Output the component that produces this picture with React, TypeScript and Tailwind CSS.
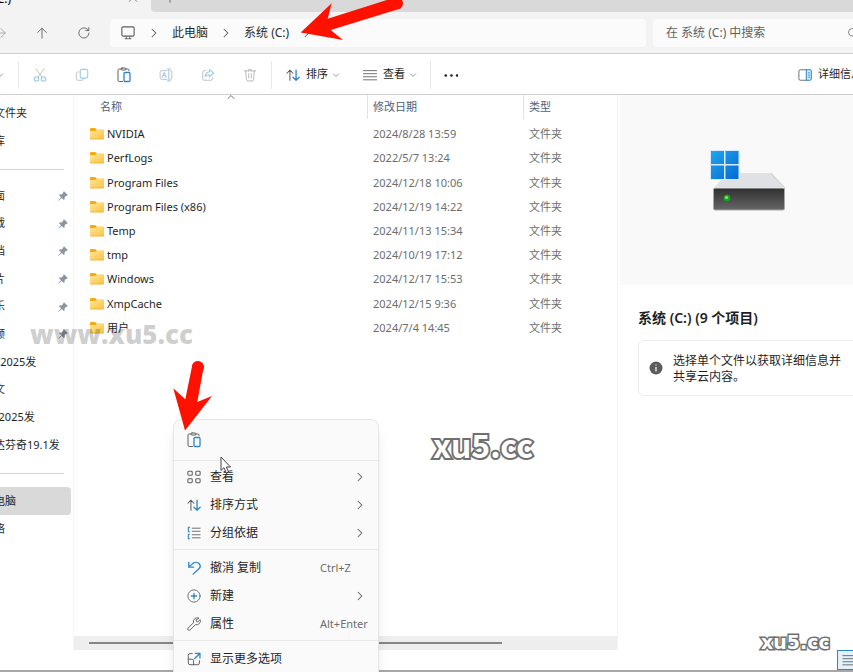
import React from 'react';

const BLUE = '#2a86c8';
const GRAY = '#5f5f5f';

const files = [
  { name: 'NVIDIA', date: '2024/8/28 13:59' },
  { name: 'PerfLogs', date: '2022/5/7 13:24' },
  { name: 'Program Files', date: '2024/12/18 10:06' },
  { name: 'Program Files (x86)', date: '2024/12/19 14:22' },
  { name: 'Temp', date: '2024/11/13 15:34' },
  { name: 'tmp', date: '2024/10/19 17:12' },
  { name: 'Windows', date: '2024/12/17 15:53' },
  { name: 'XmpCache', date: '2024/12/15 9:36' },
  { name: '用户', date: '2024/7/4 14:45' },
];

const quickAccess = [
  { label: '面', pinned: true },
  { label: '载', pinned: true },
  { label: '档', pinned: true },
  { label: '片', pinned: true },
  { label: '乐', pinned: true },
  { label: '频', pinned: true },
  { label: 'e2025发', pinned: false },
  { label: '文', pinned: false },
  { label: 'r2025发', pinned: false },
  { label: '达芬奇19.1发', pinned: false },
];

interface IconProps {
  className?: string;
  children: React.ReactNode;
}

const Icon = ({ className = 'size-[14px]', children }: IconProps) => (
  <svg
    className={`${className} shrink-0`}
    viewBox="0 0 16 16"
    fill="none"
    stroke={GRAY}
    strokeLinecap="round"
    strokeLinejoin="round"
    aria-hidden="true"
  >
    {children}
  </svg>
);

const Chevron = ({ className = 'size-3' }: { className?: string }) => (
  <Icon className={className}>
    <path d="M5.5 3l5 5-5 5" strokeWidth={1.4} />
  </Icon>
);

const ChevronDown = () => (
  <Icon className="size-2">
    <path d="M3 6l5 5 5-5" strokeWidth={1.8} stroke="#8a8a8a" />
  </Icon>
);

const PasteIcon = () => (
  <Icon className="size-4">
    <path d="M6.5 14.5H3.2A1.2 1.2 0 0 1 2 13.3V3.2A1.2 1.2 0 0 1 3.2 2H5m5 0h1.8A1.2 1.2 0 0 1 13 3.2v.6" />
    <rect x="5" y="1" width="5" height="2" rx="1" />
    <rect x="8" y="5.5" width="6" height="9" rx="1" stroke={BLUE} strokeWidth={1.3} fill="#fff" />
  </Icon>
);

const SortIcon = () => (
  <Icon>
    <path d="M4.5 14V2.5M1 6l3.5-3.5L8 6" strokeWidth={1.2} />
    <path d="M11.5 2.5V14M8 10.5l3.5 3.5 3.5-3.5" stroke={BLUE} strokeWidth={1.5} />
  </Icon>
);

const FolderIcon = () => (
  <svg className="h-3 w-[14px] shrink-0" viewBox="0 0 14 12" aria-hidden="true">
    <path d="M0 1.2C0 .5.4 0 1.1 0h3.6c.5 0 .8.2 1.1.5L7 1.8h6c.6 0 1 .4 1 1V6H0z" fill="#f4ab12" />
    <path d="M0 4c0-.5.4-.9.9-.9h3.8c.4 0 .7-.1 1-.4l.9-.6c.2-.2.5-.3.8-.3H13c.6 0 1 .4 1 1v7.5c0 .6-.4 1-1 1H1c-.6 0-1-.4-1-1z" fill="url(#folder)" />
    <path d="M.3 11h13.4" stroke="#e5a93a" strokeWidth=".7" />
    <defs>
      <linearGradient id="folder" x1="0" y1="0" x2="1" y2="1">
        <stop offset="0" stopColor="#ffe59a" />
        <stop offset="1" stopColor="#fcc43a" />
      </linearGradient>
    </defs>
  </svg>
);

const PinIcon = () => (
  <svg className="size-[10px] shrink-0" viewBox="0 0 10 10" fill="#8b95a0" aria-hidden="true">
    <path d="M6 .3L9.7 4l-.9.9-.6-.2-1.6 1.6.1 1.8-.9.9-2-2L.6 9.7.2 9.4 3 6.2l-2-2 .9-.9 1.8.1 1.6-1.6-.2-.6z" />
  </svg>
);

const NavigationBar = () => (
  <header className="border-b border-[#cfcfcf] bg-[#f3f3f3]">
    <div className="flex h-3 items-start overflow-hidden">
      <div className="flex w-[151px] shrink-0 items-start justify-between pr-3">
        <span className="-mt-[9px] -ml-[34px] text-xs leading-4">系统 (C:)</span>
        <button aria-label="关闭标签页" className="-mt-2">
          <Icon className="size-3">
            <path d="M3 2.5l10 10M13 2.5l-10 10" />
          </Icon>
        </button>
      </div>
      <div className="flex h-3 flex-1 items-start rounded-bl bg-[#d9d9d9] pl-3">
        <button aria-label="新建标签页" className="-mt-[10px]">
          <Icon>
            <path d="M8 2v12M2 8h12" />
          </Icon>
        </button>
      </div>
    </div>
    <div className="flex h-[41px] items-center">
      <nav className="-ml-[7px] flex w-[117px] shrink-0 items-center gap-7">
        <button aria-label="前进">
          <Icon>
            <path d="M1 8h13M9 3l5 5-5 5" stroke="#a5a5a5" />
          </Icon>
        </button>
        <button aria-label="上移">
          <Icon>
            <path d="M8 14V2.5M3 7.5l5-5 5 5" />
          </Icon>
        </button>
        <button aria-label="刷新">
          <Icon>
            <path d="M13.7 8A5.8 5.8 0 1 1 11.5 3.4L13.3 5M13.5 1.8V5.2H10" />
          </Icon>
        </button>
      </nav>
      <div className="flex h-7 flex-1 items-center rounded bg-[#fbfbfb] pl-[11px] text-xs text-[#2b2b2b]">
        <Icon>
          <rect x="1" y="1" width="14" height="10.5" rx="1.5" strokeWidth={1.3} />
          <path d="M4.5 14.5h7M6 12v2.5M10 12v2.5" />
        </Icon>
        <span className="ml-[13px]">
          <Chevron />
        </span>
        <button className="ml-3">此电脑</button>
        <span className="ml-3">
          <Chevron />
        </span>
        <button className="ml-3">系统 (C:)</button>
        <span className="ml-3">
          <Chevron />
        </span>
      </div>
      <div className="ml-[7px] flex h-7 w-[200px] shrink-0 items-center rounded-l bg-[#fbfbfb] pl-[13px]">
        <input
          aria-label="搜索"
          placeholder="在 系统 (C:) 中搜索"
          className="w-[181px] bg-transparent text-xs outline-none placeholder:text-[#5f5f5f]"
        />
        <Icon className="-mr-3 size-3">
          <circle cx="7" cy="7" r="5" />
          <path d="M11 11l4 4" />
        </Icon>
      </div>
    </div>
  </header>
);

const Toolbar = () => (
  <div className="flex h-[41px] items-center overflow-hidden border-b border-[#cfcfcf] bg-white pt-px text-[11px] text-[#1f1f1f]">
    <button aria-label="新建" className="-ml-1 w-[22px] shrink-0">
      <ChevronDown />
    </button>
    <div className="h-7 w-px bg-[#e8e8e8]" />
    <div className="grid w-[252px] shrink-0 grid-cols-6 justify-items-center">
      <button aria-label="剪切" disabled>
        <Icon>
          <path d="M3.5 1l6.7 9.5M12.5 1L5.8 10.5" stroke="#b9b9b9" />
          <circle cx="4" cy="12.5" r="2.5" stroke="#9ccbec" strokeWidth={1.4} />
          <circle cx="12" cy="12.5" r="2.5" stroke="#9ccbec" strokeWidth={1.4} />
        </Icon>
      </button>
      <button aria-label="复制" disabled>
        <Icon>
          <path d="M4 4.5h-.8A1.7 1.7 0 0 0 1.5 6.2v6A1.8 1.8 0 0 0 3.3 14H8a1.7 1.7 0 0 0 1.7-1.5" stroke="#b9b9b9" />
          <rect x="6" y="1.5" width="8.5" height="10" rx="1.7" stroke="#9ccbec" strokeWidth={1.3} />
        </Icon>
      </button>
      <button aria-label="粘贴">
        <PasteIcon />
      </button>
      <button aria-label="重命名" disabled>
        <Icon>
          <path d="M9 13H3A1.7 1.7 0 0 1 1.3 11.3V4.7A1.7 1.7 0 0 1 3 3h6M13 3a1.7 1.7 0 0 1 1.7 1.7v6.6A1.7 1.7 0 0 1 13 13" stroke="#b9b9b9" />
          <path d="M9.5 1.2H13M9.5 14.8H13M11.2 1.2v13.6M3.5 10.5L5.9 5l2.3 5.5M4.4 8.8h3" stroke="#9ccbec" strokeWidth={1.2} />
        </Icon>
      </button>
      <button aria-label="共享" disabled>
        <Icon>
          <path d="M5.5 3H3.7A1.7 1.7 0 0 0 2 4.7v7.6A1.7 1.7 0 0 0 3.7 14h7.6a1.7 1.7 0 0 0 1.7-1.7V11" stroke="#b9b9b9" />
          <path d="M9.7 1.8L14.5 6l-4.8 4.2V7.8C7.5 7.7 6 8.3 4.7 10c.2-3 1.8-5.5 5-5.8z" stroke="#9ccbec" strokeWidth={1.2} />
        </Icon>
      </button>
      <button aria-label="删除" disabled>
        <Icon>
          <path d="M1.5 3.3h13M6 3.3a2 2 0 0 1 4 0M3 3.3l.9 10c.1.9.7 1.5 1.5 1.5h5.2c.8 0 1.4-.6 1.5-1.5l.9-10M6.5 6.5v5M9.5 6.5v5" stroke="#b0b0b0" />
        </Icon>
      </button>
    </div>
    <div className="h-7 w-px shrink-0 bg-[#e8e8e8]" />
    <button className="ml-[14px] flex shrink-0 items-center">
      <SortIcon />
      <span className="mr-1 ml-[6px]">排序</span>
      <ChevronDown />
    </button>
    <button className="ml-[23px] flex shrink-0 items-center">
      <Icon>
        <path d="M.5 3h15M.5 6.500h15M.5 10h15M.5 13.500h15" />
      </Icon>
      <span className="mr-1 ml-[6px]">查看</span>
      <ChevronDown />
    </button>
    <div className="ml-[13px] h-7 w-px shrink-0 bg-[#e8e8e8]" />
    <button aria-label="更多" className="ml-[13px] shrink-0">
      <Icon>
        <g fill="#1f1f1f" stroke="none">
          <circle cx="2" cy="8.5" r="1.5" />
          <circle cx="8.5" cy="8.5" r="1.5" />
          <circle cx="15" cy="8.5" r="1.5" />
        </g>
      </Icon>
    </button>
    <button className="-mr-[9px] ml-auto flex shrink-0 items-center gap-[6px]">
      <Icon>
        <path d="M9.5 2H2.7A1.7 1.7 0 0 0 1 3.7v8.6A1.7 1.7 0 0 0 2.7 14h6.8" />
        <path d="M9.5 2h4a1.7 1.7 0 0 1 1.7 1.7v8.6a1.7 1.7 0 0 1-1.7 1.7h-4z" stroke={BLUE} fill="#d9effc" strokeWidth={1.2} />
        <path d="M11.7 5.5h1.5M11.7 8h1.5M11.7 10.5h1.5" stroke={BLUE} />
      </Icon>
      详细信息
    </button>
  </div>
);

const SidebarItem = ({ label, pinned = false }: { label: string; pinned?: boolean }) => (
  <li className="flex items-center justify-between pr-[5px] whitespace-nowrap">
    <a href="#" className="-ml-[6px]">
      {label}
    </a>
    {pinned && <PinIcon />}
  </li>
);

const Sidebar = () => (
  <aside className="w-[74px] shrink-0 overflow-hidden border-r border-[#f5f5f5] pt-1 text-[11px] text-[#1f1f1f]">
    <ul className="grid auto-rows-[28px]">
      <SidebarItem label="文件夹" />
      <SidebarItem label="库" />
    </ul>
    <hr className="mt-[14px] mr-[9px] mb-3 border-[#d4d4d4]" />
    <ul className="grid h-[277px] auto-rows-fr">
      {quickAccess.map((item) => (
        <SidebarItem key={item.label} label={item.label} pinned={item.pinned} />
      ))}
    </ul>
    <hr className="mt-[14px] mr-[9px] mb-[13px] border-[#d4d4d4]" />
    <ul className="mr-[2px] grid auto-rows-[28px]">
      <li className="flex items-center rounded-r-sm bg-[#d9d9d9]">
        <a href="#" className="-ml-[6px]">
          电脑
        </a>
      </li>
      <SidebarItem label="络" />
    </ul>
  </aside>
);

const FileList = () => (
  <main className="flex min-w-0 flex-1 flex-col border-r border-[#f3f3f3]">
    <table className="h-[245px] w-full table-fixed text-left text-[11px] leading-4">
      <colgroup>
        <col className="w-[293px]" />
        <col className="w-[156px]" />
        <col />
      </colgroup>
      <thead className="text-[#4c607a]">
        <tr className="h-[27px] align-top">
          <th className="p-0 font-normal">
            <div className="flex h-6 items-start">
              <span className="w-[153px] pt-1 pl-[26px]">名称</span>
              <Icon className="size-2">
                <path d="M2 7l6-6 6 6" strokeWidth={1.8} />
              </Icon>
            </div>
          </th>
          <th className="p-0 font-normal">
            <div className="h-6 border-l border-[#e2e2e2] pt-1 pl-[5px]">修改日期</div>
          </th>
          <th className="p-0 font-normal">
            <div className="h-6 border-l border-[#e2e2e2] pt-1 pl-[5px]">类型</div>
          </th>
        </tr>
      </thead>
      <tbody className="text-[#6d6d6d]">
        {files.map((file) => (
          <tr key={file.name}>
            <td className="p-0 pl-4">
              <div className="flex items-center gap-[3px] text-[#1f1f1f]">
                <FolderIcon />
                {file.name}
              </div>
            </td>
            <td className="p-0 pl-[6px]">{file.date}</td>
            <td className="p-0 pl-[6px]">文件夹</td>
          </tr>
        ))}
      </tbody>
    </table>
    <div className="mt-auto flex h-[14px] items-center bg-[#eeeeee] pl-[15px]">
      <div className="h-[2px] w-[413px] bg-[#868686]" />
    </div>
  </main>
);

const DriveImage = () => (
  <svg className="h-[62px] w-[78px]" viewBox="0 0 78 62" aria-hidden="true">
    <defs>
      <linearGradient id="tile" x1="0" y1="0" x2="1" y2="1">
        <stop offset="0" stopColor="#1fa5ec" />
        <stop offset="1" stopColor="#0669d6" />
      </linearGradient>
      <linearGradient id="front" x1="0" y1="0" x2="0" y2="1">
        <stop offset="0" stopColor="#2f2f2f" />
        <stop offset="1" stopColor="#666" />
      </linearGradient>
    </defs>
    <path d="M18 23h44l14 15H5z" fill="#dfe1e5" />
    <path d="M62 23l14 15" stroke="#c9cbd0" />
    <rect x="4.5" y="38" width="71" height="22" rx="1.5" fill="url(#front)" stroke="#a9a9a9" />
    <path d="M5 37.7h70" stroke="#e9eaec" />
    <circle cx="18" cy="48" r="3.3" fill="#18a51c" />
    <circle cx="17.5" cy="47.5" r="1.6" fill="#6df06c" />
    <rect x="1" y="0" width="30" height="30" fill="#d6ecfb" />
    <path d="M2 1h13v13H2zM16.5 1h13v13h-13zM2 15.5h13V29H2zM16.5 15.5h13V29h-13z" fill="url(#tile)" />
  </svg>
);

const DetailsPane = () => (
  <aside className="w-[235px] shrink-0 overflow-hidden pl-[2px]">
    <div className="h-[190px] bg-[#f9f9f9] pt-[55px] pl-[89px]">
      <DriveImage />
    </div>
    <div className="pt-[21px] pl-[18px] text-[#1f1f1f]">
      <h2 className="text-sm leading-6 font-semibold">系统 (C:) (9 个项目)</h2>
      <div className="mt-[10px] -mr-4 flex h-14 items-center gap-[10px] rounded-md border border-[#ececec] pl-[10px] text-xs leading-4">
        <svg className="size-[14px] shrink-0" viewBox="0 0 14 14" aria-hidden="true">
          <circle cx="7" cy="7" r="6.5" fill="#5c5c5c" />
          <path d="M7 6v4.5M7 3.5v1" stroke="#fff" strokeWidth="1.2" />
        </svg>
        <p className="pt-[2px] whitespace-nowrap">
          选择单个文件以获取详细信息并
          <br />
          共享云内容。
        </p>
      </div>
    </div>
  </aside>
);

interface MenuItemProps {
  label: string;
  shortcut?: string;
  submenu?: boolean;
  children: React.ReactNode;
}

const MenuItem = ({ label, shortcut, submenu, children }: MenuItemProps) => (
  <button role="menuitem" className="flex h-7 w-full items-center pl-[13px] text-left">
    {children}
    <span className="ml-[9px] w-[110px] whitespace-nowrap">{label}</span>
    {shortcut && <span className="text-[11px] text-[#6d6d6d]">{shortcut}</span>}
    {submenu && (
      <span className="ml-[34px]">
        <Chevron />
      </span>
    )}
  </button>
);

const ContextMenu = () => (
  <div
    role="menu"
    className="absolute top-[419px] left-[173px] w-[206px] rounded-lg border border-[#e6e6e6] bg-[#fafafa] pb-2 text-xs text-[#1f1f1f] shadow-lg"
  >
    <div className="flex h-10 items-center pl-3">
      <button aria-label="粘贴">
        <PasteIcon />
      </button>
    </div>
    <div className="border-t border-[#e9e9e9] pt-[2px] pb-[2px]">
      <MenuItem label="查看" submenu>
        <Icon>
          <rect x="1" y="1.5" width="5" height="4.5" rx="1" strokeWidth={1.2} />
          <rect x="10" y="1.5" width="5" height="4.5" rx="1" strokeWidth={1.2} />
          <rect x="1" y="10" width="5" height="4.5" rx="1" strokeWidth={1.2} />
          <rect x="10" y="10" width="5" height="4.5" rx="1" strokeWidth={1.2} />
        </Icon>
      </MenuItem>
      <MenuItem label="排序方式" submenu>
        <SortIcon />
      </MenuItem>
      <MenuItem label="分组依据" submenu>
        <Icon>
          <path d="M6 2.5h9M6 6h9M6 10h9M6 13.5h9" />
          <path d="M3 1.5H1.5V6.5H3M3 9.5H1.5v5H3" stroke={BLUE} strokeWidth={1.2} />
        </Icon>
      </MenuItem>
    </div>
    <div className="border-t border-[#e9e9e9] pt-1 pb-[2px]">
      <MenuItem label="撤消 复制" shortcut="Ctrl+Z">
        <Icon>
          <path d="M2 1.5V7h5.5M2 7l4.5-4c2.5-2 5.8-1.8 7.500.2s1.200 4.300-.7 6L7 15" stroke={BLUE} strokeWidth={1.5} />
        </Icon>
      </MenuItem>
      <MenuItem label="新建" submenu>
        <Icon>
          <circle cx="8" cy="8" r="7" />
          <path d="M8 5v6M5 8h6" stroke={BLUE} strokeWidth={1.5} />
        </Icon>
      </MenuItem>
      <MenuItem label="属性" shortcut="Alt+Enter">
        <Icon>
          <path d="M13.2 1.2a4.3 4.3 0 0 0-5.7 5.3L1.3 12.5a1.6 1.6 0 0 0 2.3 2.3L9.7 8.7A4.3 4.3 0 0 0 15 3l-2.600 2.600-1.600-.4-.3-1.500z" strokeWidth={1.1} />
        </Icon>
      </MenuItem>
    </div>
    <div className="border-t border-[#e9e9e9] pt-1">
      <MenuItem label="显示更多选项">
        <Icon>
          <path d="M6 1.8H3.5a2 2 0 0 0-2 2v8.7a2 2 0 0 0 2 2h8.7a2 2 0 0 0 2-2V10M1.5 8.3h4.3A1.7 1.7 0 0 1 7.5 10v4.5" strokeWidth={1.1} />
          <path d="M9.5 1.5h5.3v5.3M14.8 1.5l-6 6" stroke={BLUE} strokeWidth={1.5} />
        </Icon>
      </MenuItem>
    </div>
  </div>
);

const Annotations = () => (
  <div className="pointer-events-none">
    <svg className="absolute top-0 left-[300px] h-[42px] w-[106px]" viewBox="0 0 106 42" fill="#ff1100" aria-hidden="true">
      <path d="M.7 32.5L31.7 3.3l-4 15.4L90-1h6a6 6 0 0 1 4.5 9.5L30.7 30 43 40z" />
      <circle cx="97" cy="3.3" r="6" />
    </svg>
    <svg className="absolute top-[360px] left-[173px] h-[72px] w-10" viewBox="0 0 40 72" fill="#ff1100" aria-hidden="true">
      <path d="M12 70.5L.3 28.3l12 11L19.3 5a6 6 0 0 1 11.4 2L24.3 42 39 36z" />
      <circle cx="25" cy="7" r="6" />
    </svg>
    <svg className="absolute top-[456px] left-[220px] h-[19px] w-3" viewBox="0 0 12 19" aria-hidden="true">
      <path d="M1 1v13.5l3-2.8 2.3 5.3 2.3-1-2.3-5h4.2z" fill="#fff" stroke="#444" />
    </svg>
    <span className="absolute top-[318px] left-[30px] font-['Open_Sans','Noto_Sans',sans-serif] text-[26px] leading-8 font-extrabold text-black/20">
      www.xu5.cc
    </span>
    <span className="absolute top-[424px] left-[433px] font-['Noto_Sans_CJK_SC',sans-serif] text-[32px] leading-10 font-bold text-white [-webkit-text-stroke:4px_#707070] [paint-order:stroke]">
      xu5.cc
    </span>
    <span className="absolute top-[630px] left-[761px] font-['DejaVu_Sans',sans-serif] text-[19px] leading-6 font-bold text-white [-webkit-text-stroke:3px_#707070] [paint-order:stroke]">
      xu5.cc
    </span>
  </div>
);

const App = () => (
  <div className="relative flex h-screen flex-col overflow-hidden bg-white font-['Noto_Sans','Noto_Sans_CJK_SC',sans-serif]">
    <NavigationBar />
    <Toolbar />
    <div className="flex min-h-0 flex-1">
      <Sidebar />
      <FileList />
      <DetailsPane />
    </div>
    <footer className="flex h-[22px] justify-end border-b-2 border-[#a8a8a8]">
      <button aria-label="详细信息视图" className="-mr-1 flex w-5 items-center border border-[#2a86c8] bg-[#e2f1fb] pl-1">
        <Icon>
          <path d="M1 3h14M1 6.5h14M1 10h14M1 13.5h14" />
        </Icon>
      </button>
    </footer>
    <ContextMenu />
    <Annotations />
  </div>
);

export default App;
